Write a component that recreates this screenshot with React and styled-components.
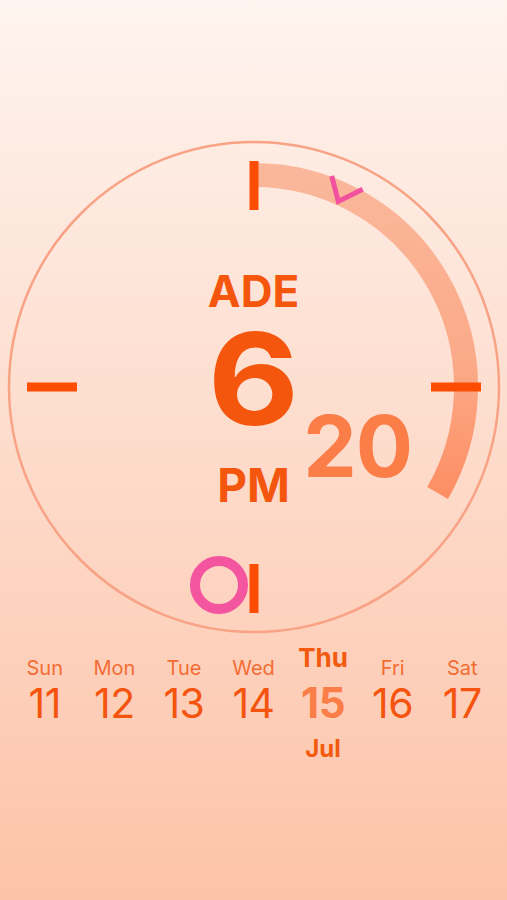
import React from 'react';
import styled, { createGlobalStyle } from 'styled-components';

const GlobalStyle = createGlobalStyle`
  html, body { margin: 0; padding: 0; }
  body { font-family: Inter, "Liberation Sans", "Noto Sans", sans-serif; }
`;

const ORANGE = '#f5560d';
const LIGHT = '#fb7d47';

const Screen = styled.div`
  width: 100%;
  height: 900px;
  box-sizing: border-box;
  padding-top: 140px;
  display: flex;
  flex-direction: column;
  background: linear-gradient(180deg, #fef4ef 0%, #fdc3a8 100%);
  overflow: hidden;
`;

const Face = styled.div`
  position: relative;
  width: 494px;
  height: 494px;
  margin: 0 auto;
  flex-shrink: 0;
`;

const Dial = styled.svg`
  position: absolute;
  inset: 0;
  width: 100%;
  height: 100%;
`;

const Readout = styled.div`
  position: relative;
  display: grid;
  grid-template-columns: 1fr auto 1fr;
  padding-top: 129px;
  color: ${ORANGE};
  font-weight: 700;
`;

const Zone = styled.div`
  grid-column: 2;
  grid-row: 1;
  justify-self: center;
  font-size: 44px;
  line-height: 44px;
`;

const Hour = styled.div`
  grid-column: 2;
  grid-row: 2;
  justify-self: center;
  margin-top: 11px;
  font-size: 128px;
  line-height: 110px;
  transform: scaleX(1.1);
`;

const Meridiem = styled.div`
  grid-column: 2;
  grid-row: 3;
  justify-self: center;
  margin-top: 28px;
  font-size: 46px;
  line-height: 46px;
`;

const Minute = styled.div`
  grid-column: 3;
  grid-row: 2 / 4;
  align-self: start;
  justify-self: start;
  margin-top: 91px;
  margin-left: 4px;
  font-size: 85px;
  line-height: 85px;
  color: ${LIGHT};
  letter-spacing: -1px;
`;

const Week = styled.div`
  display: grid;
  grid-template-columns: repeat(7, 1fr);
  padding: 0 10px;
  margin-top: 22px;
`;

const Day = styled.div`
  display: flex;
  flex-direction: column;
  align-items: center;
`;

const DayName = styled.div`
  height: 24px;
  font-size: ${(p) => (p.$today ? '26px' : '20px')};
  line-height: 24px;
  font-weight: ${(p) => (p.$today ? 700 : 400)};
  color: ${(p) => (p.$today ? '#f25a10' : '#f26c34')};
  margin-top: ${(p) => (p.$today ? '-10px' : '0')};
  margin-bottom: ${(p) => (p.$today ? '10px' : '0')};
`;

const DayNum = styled.div`
  margin-top: 1px;
  font-size: ${(p) => (p.$today ? '42px' : '41px')};
  line-height: 44px;
  font-weight: ${(p) => (p.$today ? 700 : 400)};
  color: ${(p) => (p.$today ? LIGHT : '#f4540e')};
  letter-spacing: -0.5px;
`;

const Month = styled.div`
  margin-top: 10px;
  font-size: 24px;
  line-height: 28px;
  font-weight: 700;
  color: #f25a10;
`;

const C = 247;
const polar = (r, deg) => {
  const a = (deg * Math.PI) / 180;
  return [C + r * Math.sin(a), C - r * Math.cos(a)];
};

function ClockDial() {
  const [ax, ay] = polar(212, 0);
  const [bx, by] = polar(212, 120);
  return (
    <Dial viewBox="0 0 494 494">
      <defs>
        <linearGradient id="arcGrad" gradientUnits="userSpaceOnUse" x1="0" y1="20" x2="0" y2="360">
          <stop offset="0" stopColor="#fab89c" />
          <stop offset="0.6" stopColor="#fbaa88" />
          <stop offset="1" stopColor="#fd8d62" />
        </linearGradient>
      </defs>
      <circle cx={C} cy={C} r="245" fill="none" stroke="#f8a385" strokeWidth="2.5" />
      <path
        d={`M ${ax} ${ay} A 212 212 0 0 1 ${bx} ${by}`}
        fill="none"
        stroke="url(#arcGrad)"
        strokeWidth="24"
      />
      <g stroke="#fc4d03" strokeWidth="9">
        <line x1={C} y1={C - 226} x2={C} y2={C - 177} />
        <line x1={C} y1={C + 177} x2={C} y2={C + 226} />
        <line x1={C - 227} y1={C} x2={C - 177} y2={C} />
        <line x1={C + 177} y1={C} x2={C + 227} y2={C} />
      </g>
      <polyline
        points={`${C + 77.7},${C - 211} ${C + 84.3},${C - 185.5} ${C + 108.7},${C - 197.7}`}
        fill="none"
        stroke="#f2519f"
        strokeWidth="5"
        strokeLinejoin="miter"
      />
      <circle cx={C - 35} cy={C + 198} r="24" fill="none" stroke="#f4559f" strokeWidth="10" />
    </Dial>
  );
}

const days = [
  ['Sun', 11],
  ['Mon', 12],
  ['Tue', 13],
  ['Wed', 14],
  ['Thu', 15, true],
  ['Fri', 16],
  ['Sat', 17],
];

export default function App() {
  return (
    <>
      <GlobalStyle />
      <Screen>
        <Face>
          <ClockDial />
          <Readout>
            <Zone>ADE</Zone>
            <Hour>6</Hour>
            <Meridiem>PM</Meridiem>
            <Minute>20</Minute>
          </Readout>
        </Face>
        <Week>
          {days.map(([name, num, today]) => (
            <Day key={name}>
              <DayName $today={today}>{name}</DayName>
              <DayNum $today={today}>{num}</DayNum>
              {today && <Month>Jul</Month>}
            </Day>
          ))}
        </Week>
      </Screen>
    </>
  );
}
